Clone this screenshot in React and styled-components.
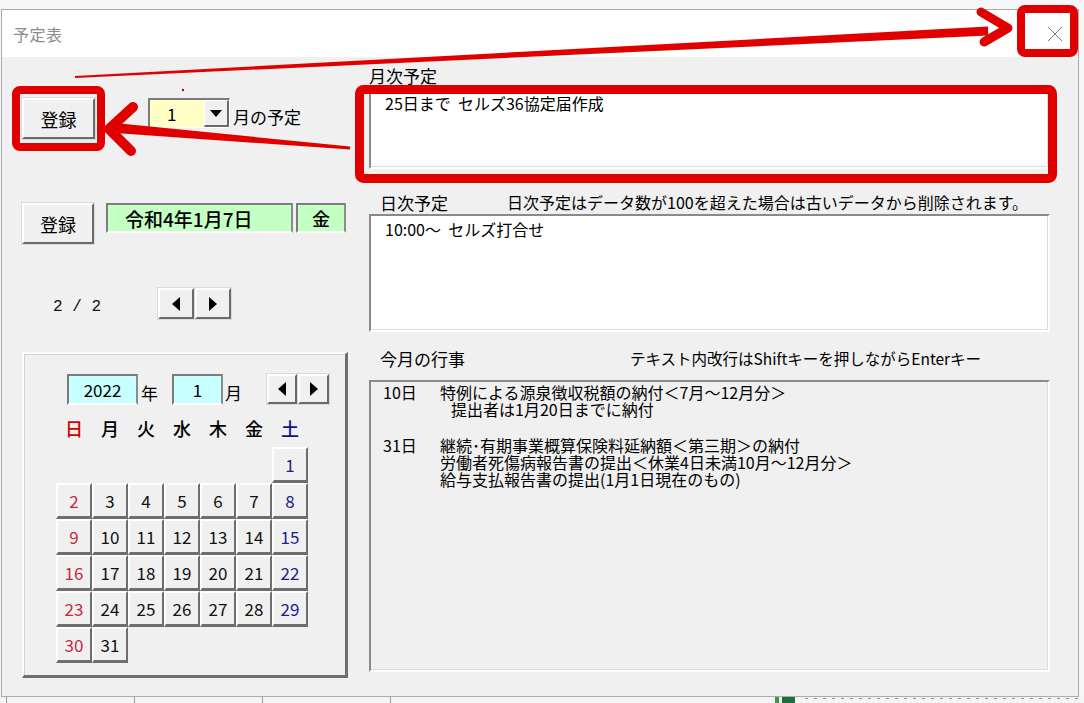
import React from 'react';
import styled, { createGlobalStyle } from 'styled-components';

const GlobalStyle = createGlobalStyle`
  html, body {
    margin: 0;
    padding: 0;
  }
  body {
    background: #fafafa;
    font-family: "Noto Sans CJK JP", "Noto Sans", sans-serif;
    color: #000;
  }
`;

const Screen = styled.div`
  position: relative;
  width: 1084px;
  height: 703px;
  overflow: hidden;
  box-sizing: border-box;
  padding: 9px 0 0 1px;
  background: #f6f6f6;
`;

const Window = styled.div`
  width: 1078px;
  height: 688px;
  box-sizing: border-box;
  border: 1px solid #acacac;
  background: #f0f0f0;
  display: flex;
  flex-direction: column;
`;

const TitleBar = styled.div`
  flex: none;
  height: 47px;
  background: #fff;
  display: flex;
  align-items: center;
  justify-content: space-between;
  padding: 0 15px 0 11px;
`;

const Title = styled.span`
  font-size: 16px;
  color: #8c8c8c;
  letter-spacing: 0.5px;
`;

const Body = styled.div`
  flex: 1;
  display: flex;
  gap: 21px;
  padding-left: 20px;
`;

const LeftCol = styled.div`
  width: 326px;
  display: flex;
  flex-direction: column;
`;

const Row = styled.div`
  display: flex;
  align-items: flex-start;
  margin-top: ${(p) => p.$top || 0}px;
`;

const RaisedButton = styled.div`
  width: ${(p) => p.$w}px;
  height: ${(p) => p.$h}px;
  box-sizing: border-box;
  background: #f0f0f0;
  border-top: 2px solid #fff;
  border-left: 2px solid #fff;
  border-right: 2px solid #6a6a6a;
  border-bottom: 2px solid #6a6a6a;
  box-shadow: 0 0 0 1px #dadada;
  display: flex;
  align-items: center;
  justify-content: center;
  font-size: ${(p) => p.$fs || 18}px;
  flex: none;
`;

const Combo = styled.div`
  margin-left: 53px;
  width: 82px;
  height: 30px;
  box-sizing: border-box;
  display: flex;
  border-top: 2px solid #7c7c7c;
  border-left: 2px solid #7c7c7c;
  border-right: 1px solid #fff;
  border-bottom: 1px solid #fff;
`;

const ComboField = styled.div`
  flex: 1;
  background: #ffffc6;
  font-size: 17px;
  line-height: 27px;
  padding-left: 17px;
`;

const ComboButton = styled.div`
  width: 25px;
  box-sizing: border-box;
  background: #f0f0f0;
  border-top: 1px solid #fff;
  border-left: 1px solid #fff;
  border-right: 2px solid #6a6a6a;
  border-bottom: 2px solid #6a6a6a;
  display: flex;
  align-items: center;
  justify-content: center;
`;

const DownTri = styled.span`
  width: 0;
  height: 0;
  border-left: 6px solid transparent;
  border-right: 6px solid transparent;
  border-top: 7px solid #000;
`;

const Tri = styled.span`
  width: 0;
  height: 0;
  border-top: 7px solid transparent;
  border-bottom: 7px solid transparent;
  ${(p) => (p.$dir === 'left' ? 'border-right: 8px solid #000;' : 'border-left: 8px solid #000;')}
`;

const Label = styled.span`
  font-size: ${(p) => p.$fs || 17}px;
  line-height: 20px;
  white-space: nowrap;
  margin-left: ${(p) => p.$ml || 0}px;
  margin-top: ${(p) => p.$mt || 0}px;
  flex: none;
`;

const SunkenField = styled.div`
  width: ${(p) => p.$w}px;
  height: ${(p) => p.$h}px;
  margin-left: ${(p) => p.$ml || 0}px;
  box-sizing: border-box;
  background: ${(p) => p.$bg};
  border-top: 2px solid #7c7c7c;
  border-left: 2px solid #7c7c7c;
  border-right: 2px solid #8c8c8c;
  border-bottom: 2px solid #fff;
  display: flex;
  align-items: center;
  justify-content: ${(p) => (p.$center ? 'center' : 'flex-start')};
  padding-left: ${(p) => p.$pl || 0}px;
  font-size: ${(p) => p.$fs || 18}px;
  font-weight: ${(p) => p.$fw || 400};
  flex: none;
`;

const PageText = styled.span`
  width: 105px;
  height: 31px;
  box-sizing: border-box;
  margin-left: 31px;
  padding-top: 8px;
  font-family: "Liberation Mono", "DejaVu Sans Mono", monospace;
  font-size: 16px;
  line-height: 23px;
  color: #111;
`;

const NavPair = styled.div`
  display: flex;
  gap: 1px;
  margin-left: ${(p) => p.$ml || 0}px;
  flex: none;
`;

const CalFrame = styled.div`
  margin-top: 33px;
  width: 326px;
  height: 326px;
  box-sizing: border-box;
  border-top: 2px solid #fbfbfb;
  border-left: 2px solid #fbfbfb;
  border-right: 3px solid #6e6e6e;
  border-bottom: 3px solid #6e6e6e;
  box-shadow: inset 1px 1px 0 #d4d4d4;
  padding-left: 32px;
  display: flex;
  flex-direction: column;
`;

const CalHead = styled.div`
  display: flex;
  align-items: flex-start;
  margin-top: 20px;
  margin-left: 11px;
  height: 31px;
`;

const WeekHeader = styled.div`
  display: grid;
  grid-template-columns: repeat(7, 36px);
  margin-top: 11px;
  height: 24px;
`;

const WeekDay = styled.span`
  text-align: center;
  font-size: 18px;
  line-height: 24px;
  font-weight: 500;
  color: ${(p) => (p.$tone === 'sun' ? '#d40000' : p.$tone === 'sat' ? '#10108a' : '#000')};
`;

const DayGrid = styled.div`
  display: grid;
  grid-template-columns: repeat(7, 36px);
  grid-auto-rows: 36px;
  margin-top: 7px;
`;

const DayCell = styled.div`
  box-sizing: border-box;
  background: #f0f0f0;
  border-top: 2px solid #fff;
  border-left: 2px solid #fff;
  border-right: 2px solid #6e6e6e;
  border-bottom: 3px solid #6e6e6e;
  display: flex;
  align-items: center;
  justify-content: center;
  font-size: 17px;
  color: ${(p) => (p.$tone === 'sun' ? '#c8283c' : p.$tone === 'sat' ? '#1c1c8c' : '#111')};
`;

const RightCol = styled.div`
  width: 681px;
  display: flex;
  flex-direction: column;
`;

const FieldLabel = styled.div`
  display: flex;
  align-items: center;
  height: 18px;
  margin-top: ${(p) => p.$top}px;
  padding-left: ${(p) => p.$pl || 0}px;
  font-size: 17px;
  white-space: nowrap;
`;

const LabelLead = styled.span`
  width: ${(p) => p.$w}px;
  flex: none;
`;

const Note = styled.span`
  font-size: ${(p) => p.$fs || 16}px;
`;

const TextBox = styled.div`
  margin-top: ${(p) => p.$top}px;
  height: ${(p) => p.$h}px;
  box-sizing: border-box;
  background: ${(p) => p.$bg || '#fff'};
  border-top: 2px solid #8a8a8a;
  border-left: 2px solid #8a8a8a;
  border-right: 2px solid #fff;
  border-bottom: 2px solid #fff;
  box-shadow: inset -1px -1px 0 #dcdcdc;
  padding: ${(p) => p.$pt}px 0 0 ${(p) => p.$pl || 14}px;
  font-size: 16px;
  line-height: ${(p) => p.$lh || 20}px;
  white-space: pre;
`;

const EventBlock = styled.div`
  display: flex;
  margin-top: ${(p) => p.$top || 0}px;
`;

const EventDate = styled.span`
  width: 57px;
  flex: none;
`;

const EventLines = styled.div`
  display: flex;
  flex-direction: column;
`;

const EventLine = styled.span`
  padding-left: ${(p) => (p.$indent ? 11 : 0)}px;
`;

const SheetStrip = styled.div`
  height: 6px;
  margin-left: -1px;
  background:
    linear-gradient(#1f6d3b, #1f6d3b) 782px 0 / 13px 6px no-repeat,
    linear-gradient(#2aa040, #2aa040) 775px 0 / 4px 6px no-repeat,
    repeating-linear-gradient(90deg, #8a8a8a 0 3px, transparent 3px 9px) 805px 1px / 279px 1px no-repeat,
    repeating-linear-gradient(90deg, transparent 0 6px, #9a9a9a 6px 7px, transparent 7px 128px) 0 0 / 400px 6px no-repeat,
    #f4f4f4;
`;

const Overlay = styled.svg`
  position: absolute;
  left: 0;
  top: 0;
  pointer-events: none;
`;

const Annotations = () => (
  <Overlay width="1084" height="703" viewBox="0 0 1084 703">
    <g fill="none" stroke="#e00000" strokeWidth="8" strokeLinejoin="round">
      <rect x="16" y="90" width="85" height="57" rx="4" />
      <rect x="359.5" y="89.5" width="693" height="89" rx="4" strokeWidth="9" />
      <rect x="1021" y="9" width="53" height="44" rx="4" />
    </g>
    <polygon points="75,76 988,26.5 988,35.5 75,78" fill="#e00000" />
    <polyline points="981,12 1008,28 984,42" fill="none" stroke="#e00000" strokeWidth="9" strokeLinecap="round" strokeLinejoin="round" />
    <polygon points="350,146.5 115,123 115,133 350,149.5" fill="#e00000" />
    <polyline points="133,107 109,129 131,151" fill="none" stroke="#e00000" strokeWidth="10" strokeLinecap="round" strokeLinejoin="round" />
    <circle cx="183" cy="90" r="1.2" fill="#c00000" />
  </Overlay>
);

const CloseIcon = () => (
  <svg width="16" height="16" viewBox="0 0 16 16">
    <path d="M1 1 L15 15 M15 1 L1 15" stroke="#7a7a7a" strokeWidth="1" fill="none" />
  </svg>
);

const weekDays = [
  { t: '日', tone: 'sun' },
  { t: '月' },
  { t: '火' },
  { t: '水' },
  { t: '木' },
  { t: '金' },
  { t: '土', tone: 'sat' },
];

const Calendar = () => {
  const cells = [];
  for (let i = 0; i < 6; i++) cells.push(<span key={'b' + i} />);
  for (let d = 1; d <= 31; d++) {
    const col = (d + 5) % 7;
    const tone = col === 0 ? 'sun' : col === 6 ? 'sat' : undefined;
    cells.push(
      <DayCell key={d} $tone={tone}>
        {d}
      </DayCell>
    );
  }
  return (
    <CalFrame>
      <CalHead>
        <SunkenField $w={71} $h={31} $bg="#c8ffff" $center $fs={17}>
          2022
        </SunkenField>
        <Label $ml={3} $mt={9}>年</Label>
        <SunkenField $w={51} $h={31} $bg="#c8ffff" $center $fs={17} $ml={14}>
          1
        </SunkenField>
        <Label $ml={2} $mt={9}>月</Label>
        <NavPair $ml={25}>
          <RaisedButton $w={30} $h={30}><Tri $dir="left" /></RaisedButton>
          <RaisedButton $w={31} $h={30}><Tri $dir="right" /></RaisedButton>
        </NavPair>
      </CalHead>
      <WeekHeader>
        {weekDays.map((w) => (
          <WeekDay key={w.t} $tone={w.tone}>{w.t}</WeekDay>
        ))}
      </WeekHeader>
      <DayGrid>{cells}</DayGrid>
    </CalFrame>
  );
};

export default function App() {
  return (
    <Screen>
      <GlobalStyle />
      <Window>
        <TitleBar>
          <Title>予定表</Title>
          <CloseIcon />
        </TitleBar>
        <Body>
          <LeftCol>
            <Row $top={41}>
              <RaisedButton $w={73} $h={41}>登録</RaisedButton>
              <Combo>
                <ComboField>1</ComboField>
                <ComboButton><DownTri /></ComboButton>
              </Combo>
              <Label $ml={3} $mt={9}>月の予定</Label>
            </Row>
            <Row $top={64}>
              <RaisedButton $w={72} $h={41}>登録</RaisedButton>
              <SunkenField $w={187} $h={30} $bg="#c4ffc4" $pl={17} $ml={12} $fw={500} $fs={19}>
                令和4年1月7日
              </SunkenField>
              <SunkenField $w={50} $h={30} $bg="#c4ffc4" $center $ml={3} $fw={500}>
                金
              </SunkenField>
            </Row>
            <Row $top={44}>
              <PageText>2 / 2</PageText>
              <NavPair>
                <RaisedButton $w={36} $h={31}><Tri $dir="left" /></RaisedButton>
                <RaisedButton $w={36} $h={31}><Tri $dir="right" /></RaisedButton>
              </NavPair>
            </Row>
            <Calendar />
          </LeftCol>
          <RightCol>
            <FieldLabel $top={9}>月次予定</FieldLabel>
            <TextBox $top={4} $h={81} $pt={3}>25日まで  セルズ36協定届作成</TextBox>
            <FieldLabel $top={24} $pl={11}>
              <LabelLead $w={127}>日次予定</LabelLead>
              <Note>日次予定はデータ数が100を超えた場合は古いデータから削除されます。</Note>
            </FieldLabel>
            <TextBox $top={3} $h={118} $pt={3}>10:00～  セルズ打合せ</TextBox>
            <FieldLabel $top={17} $pl={11}>
              <LabelLead $w={250}>今月の行事</LabelLead>
              <Note $fs={15.5}>テキスト内改行はShiftキーを押しながらEnterキー</Note>
            </FieldLabel>
            <TextBox $top={13} $h={292} $pt={2} $pl={12} $lh={17} $bg="#f0f0f0">
              <EventBlock>
                <EventDate>10日</EventDate>
                <EventLines>
                  <EventLine>特例による源泉徴収税額の納付＜7月～12月分＞</EventLine>
                  <EventLine $indent>提出者は1月20日までに納付</EventLine>
                </EventLines>
              </EventBlock>
              <EventBlock $top={19}>
                <EventDate>31日</EventDate>
                <EventLines>
                  <EventLine>継続･有期事業概算保険料延納額＜第三期＞の納付</EventLine>
                  <EventLine>労働者死傷病報告書の提出＜休業4日未満10月～12月分＞</EventLine>
                  <EventLine>給与支払報告書の提出(1月1日現在のもの)</EventLine>
                </EventLines>
              </EventBlock>
            </TextBox>
          </RightCol>
        </Body>
      </Window>
      <SheetStrip />
      <Annotations />
    </Screen>
  );
}
